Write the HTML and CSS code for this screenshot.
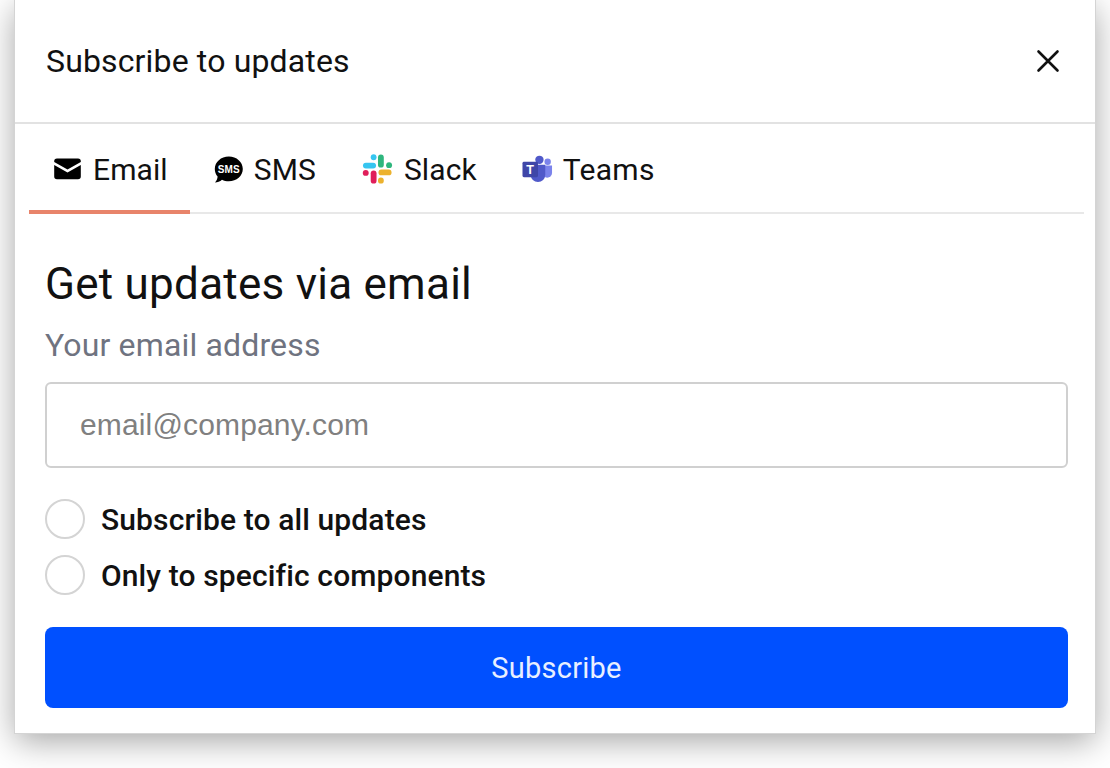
FILE: index.html
```html
<!DOCTYPE html>
<html lang="en">
<head>
    <meta charset="UTF-8">
    <meta name="viewport" content="width=device-width, initial-scale=1.0">
    <title>Subscribe to updates</title>
    <link rel="stylesheet" href="styles.css">
</head>
<body>
    <div class="modal">
        <div class="modal-header">
            <div class="modal-title">Subscribe to updates</div>
            <svg class="close" width="24" height="24" viewBox="0 0 24 24">
                <path d="M2.5 2.500 L21.500 21.500 M21.500 2.500 L2.500 21.500" stroke="#111" stroke-width="2.600" stroke-linecap="round" fill="none"/>
            </svg>
        </div>
        <div class="tabs">
            <div class="tab active">
                <svg class="tab-icon" width="27" height="22" viewBox="0 0 27 22">
                    <path d="M3 0.500 H24 A2.800 2.800 0 0 1 26.800 3.300 V4 L13.500 11.500 L0.200 4 V3.300 A2.800 2.800 0 0 1 3 0.500 Z" fill="#000"/>
                    <path d="M0.200 7 L13.500 14.500 L26.800 7 V18.500 A2.800 2.800 0 0 1 24 21.300 H3 A2.800 2.800 0 0 1 0.200 18.500 Z" fill="#000"/>
                </svg>
                <span>Email</span>
            </div>
            <div class="tab">
                <svg class="tab-icon" width="29" height="27" viewBox="0 0 29 27">
                    <path d="M14.800 0.500 C22.600 0.500 28.800 6 28.800 13 C28.800 20 22.600 25.300 14.800 25.300 C12.300 25.300 10 24.800 8 23.800 C6 25.500 3.500 26.500 1 26.500 C2.800 24.800 3.500 22.700 3.600 20.600 C1.800 18.500 0.800 15.900 0.800 13 C0.800 6 7 0.500 14.800 0.500 Z" fill="#000"/>
                    <text class="sms-glyph" x="14.800" y="16.500" text-anchor="middle">SMS</text>
                </svg>
                <span>SMS</span>
            </div>
            <div class="tab">
                <svg class="tab-icon" width="31" height="32" viewBox="0 0 32 32">
                    <g fill="none" stroke-width="6" stroke-linecap="round">
                        <path d="M4 12.500 H11.500" stroke="#36c5f0"/>
                        <path d="M12 3.800 V3.900" stroke="#36c5f0"/>
                        <path d="M19.500 4 V11.500" stroke="#2eb67d"/>
                        <path d="M28 12 H27.900" stroke="#2eb67d"/>
                        <path d="M20 19.500 H27.500" stroke="#ecb22e"/>
                        <path d="M19.500 28 V27.900" stroke="#ecb22e"/>
                        <path d="M12 20.500 V28" stroke="#e01e5a"/>
                        <path d="M3.800 20 H3.900" stroke="#e01e5a"/>
                    </g>
                </svg>
                <span>Slack</span>
            </div>
            <div class="tab">
                <svg class="tab-icon" width="31" height="28" viewBox="0 0 32 28">
                    <circle cx="18" cy="4.500" r="4.300" fill="#5059c9"/>
                    <circle cx="26.500" cy="6.500" r="3.300" fill="#7b83eb"/>
                    <path d="M21 10.500 H31 V18 A5 5 0 0 1 21 18 Z" fill="#7b83eb"/>
                    <path d="M9 9.500 H24 V20 A7.500 7.500 0 0 1 9 20 Z" fill="#5059c9"/>
                    <rect x="0.500" y="6.500" width="16" height="16" rx="1.500" fill="#3f46a8"/>
                    <text class="teams-glyph" x="8.500" y="19" text-anchor="middle">T</text>
                </svg>
                <span>Teams</span>
            </div>
        </div>
        <div class="form">
            <h2 class="form-title">Get updates via email</h2>
            <label class="field-label">Your email address</label>
            <div class="email-input">email@company.com</div>
            <div class="radio-row">
                <div class="radio"></div>
                <div class="radio-label">Subscribe to all updates</div>
            </div>
            <div class="radio-row">
                <div class="radio"></div>
                <div class="radio-label">Only to specific components</div>
            </div>
            <div class="submit">Subscribe</div>
        </div>
    </div>
</body>
</html>
```

FILE: styles.css
```css
body {
    margin: 0;
    height: 768px;
    overflow: hidden;
    background-color: #fff;
    font-family: Roboto, sans-serif;
    color: #111;
}

.modal {
    width: 1080px;
    height: 733px;
    margin-left: 15px;
    background-color: #fff;
    box-shadow: 0 0 0 1px #d4d4d4, 0 8px 32px rgba(0, 0, 0, 0.36);
}

.modal-header {
    height: 124px;
    box-sizing: border-box;
    padding: 0 35px 0 31px;
    display: flex;
    align-items: center;
    justify-content: space-between;
    border-bottom: 2px solid #e2e2e2;
}

.modal-title {
    font-size: 32px;
    letter-spacing: 0.15px;
}

.tabs {
    display: flex;
    margin: 0 11px 0 14px;
    height: 90px;
    box-sizing: border-box;
    border-bottom: 2px solid #e8e8e8;
}

.tab {
    display: flex;
    align-items: center;
    gap: 11px;
    height: 90px;
    box-sizing: border-box;
    padding: 4px 22px 0 24px;
    border-bottom: 4px solid transparent;
    font-size: 30px;
    letter-spacing: 0.1px;
}

.tab:last-child {
    gap: 10px;
    padding-left: 23px;
    letter-spacing: 0.3px;
}

.tab.active {
    gap: 12px;
    padding-left: 25px;
    padding-right: 22px;
    border-bottom-color: #e8846b;
}

.sms-glyph {
    font-family: "Liberation Sans", sans-serif;
    font-size: 10px;
    font-weight: bold;
    fill: #fff;
}

.teams-glyph {
    font-family: "Liberation Sans", sans-serif;
    font-size: 13px;
    font-weight: bold;
    fill: #fff;
}

.form {
    padding: 0 27px 0 30px;
}

.form-title {
    margin: 40px 0 0;
    font-size: 44px;
    letter-spacing: 0.25px;
    line-height: 60px;
    font-weight: 400;
}

.field-label {
    display: block;
    margin-top: 11px;
    font-size: 32px;
    letter-spacing: 0.15px;
    line-height: 40px;
    color: #6f7380;
}

.email-input {
    margin-top: 17px;
    height: 86px;
    box-sizing: border-box;
    padding-left: 33px;
    display: flex;
    align-items: center;
    border: 2px solid #d0d0d0;
    border-radius: 6px;
    font-family: "Liberation Sans", sans-serif;
    font-size: 30px;
    letter-spacing: 0.15px;
    color: #808080;
}

.radio-row {
    display: flex;
    align-items: center;
    gap: 16px;
    height: 56px;
}

.email-input + .radio-row {
    margin-top: 23px;
}

.radio {
    width: 40px;
    height: 40px;
    box-sizing: border-box;
    border: 2px solid #d4d4d4;
    border-radius: 50%;
}

.radio-label {
    font-size: 30px;
    letter-spacing: 0.12px;
    font-weight: 500;
}

.submit {
    margin-top: 24px;
    height: 81px;
    display: flex;
    align-items: center;
    justify-content: center;
    background-color: #0050ff;
    border-radius: 8px;
    color: #e8efff;
    font-size: 29px;
    letter-spacing: 0.25px;
}
```
